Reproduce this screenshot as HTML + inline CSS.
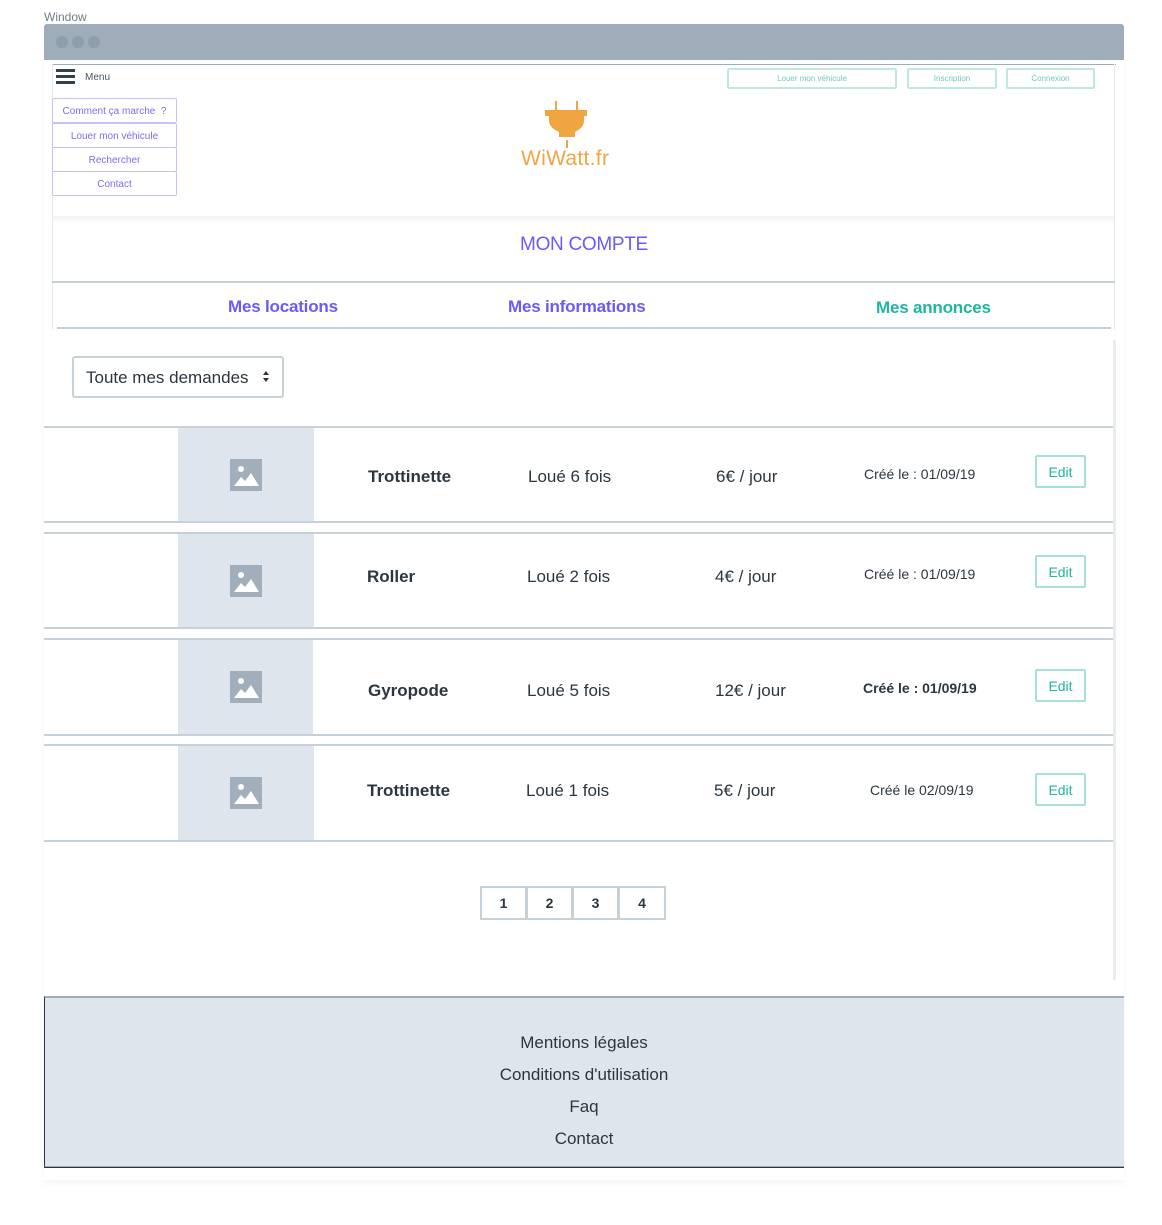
<!DOCTYPE html>
<html><head><meta charset="utf-8"><style>
*{margin:0;padding:0;box-sizing:border-box}
body{width:1162px;height:1225px;background:#fff;position:relative;font-family:"Liberation Sans",sans-serif;color:#2b3640;overflow:hidden}
.a{position:absolute}
.t{position:absolute;white-space:nowrap}
.hl{position:absolute;height:2px;background:#c5d0d9}
.menu{position:absolute;left:52px;width:125px;height:25px;border:1px solid #c9c0fb;border-radius:2px;color:#7b6cf5;font-size:10px;text-align:center;line-height:25px}
.tb{position:absolute;top:68px;height:21px;border:2px solid #bfe8e2;border-radius:2px;color:#6fc8bb;font-size:8px;text-align:center;line-height:18px}
.img{position:absolute;left:178px;width:136px;height:95px;background:#dfe5ec}
.img svg{position:absolute;left:52px;top:31px}
.nm{font-weight:bold;font-size:17px}
.c{font-size:17px}
.d{font-size:14px}
.ed{position:absolute;left:1035px;width:51px;height:33px;border:2px solid #a6e0d8;border-radius:2px;color:#1fb5a0;font-size:14px;text-align:center;line-height:30px}
.pg{position:absolute;top:886px;width:47px;height:34px;border:2px solid #c5d0d9;font-weight:bold;font-size:14px;text-align:center;line-height:30px}
.f{position:absolute;left:44px;width:1080px;text-align:center;font-size:17px;color:#2b3640}
</style></head><body>
<div class="t" style="left:44px;top:10px;font-size:12px;color:#6f7d88">Window</div>
<div class="a" style="left:44px;top:24px;width:1080px;height:36px;background:#9eadb9;border-radius:3px 3px 0 0"></div>
<div class="a" style="left:56px;top:36px;width:12px;height:12px;border-radius:6px;background:#8f9eab"></div>
<div class="a" style="left:72px;top:36px;width:12px;height:12px;border-radius:6px;background:#8f9eab"></div>
<div class="a" style="left:88px;top:36px;width:12px;height:12px;border-radius:6px;background:#8f9eab"></div>
<div class="a" style="left:44px;top:60px;width:1080px;height:1120px;box-shadow:0 4px 6px rgba(0,0,0,0.04)"></div>
<div class="a" style="left:52px;top:64px;width:1064px;height:1px;background:#9eadb9"></div>
<div class="a" style="left:52px;top:64px;width:1px;height:266px;background:#e6eaee"></div>
<div class="a" style="left:1114px;top:64px;width:1px;height:266px;background:#e6eaee"></div>
<div class="a" style="left:53px;top:216px;width:1061px;height:8px;background:linear-gradient(#f1f2f3,#fff)"></div>
<div class="a" style="left:56px;top:69px;width:19px;height:3px;background:#34404a"></div>
<div class="a" style="left:56px;top:75px;width:19px;height:3px;background:#34404a"></div>
<div class="a" style="left:56px;top:81px;width:19px;height:3px;background:#34404a"></div>
<div class="t" style="left:85px;top:72px;font-size:10px;color:#4a5560">Menu</div>
<div class="menu" style="top:98px">Comment ça marche &nbsp;?</div>
<div class="menu" style="top:123px">Louer mon véhicule</div>
<div class="menu" style="top:147px">Rechercher</div>
<div class="menu" style="top:171px">Contact</div>
<div class="tb" style="left:727px;width:170px">Louer mon véhicule</div>
<div class="tb" style="left:907px;width:90px">Inscription</div>
<div class="tb" style="left:1006px;width:89px">Connexion</div>
<svg class="a" style="left:540px;top:98px" width="54" height="52" viewBox="0 0 54 52">
<rect x="15" y="3" width="2" height="10" fill="#f0a540"/><rect x="36" y="3" width="2" height="10" fill="#f0a540"/>
<rect x="5" y="12" width="42" height="6" fill="#f0a540"/>
<path d="M9 18 H44 V22 C44 30 38 32 35 34 V39 H19 V34 C16 32 9 30 9 22 Z" fill="#f0a540"/>
<rect x="26" y="42" width="2" height="8" fill="#f0a540"/>
</svg>
<div class="t" style="left:521px;top:147px;font-size:21px;color:#f0a540;letter-spacing:0.3px">WiWatt.fr</div>
<div class="t" style="left:0;width:1168px;text-align:center;top:234px;font-size:19px;color:#6a5af9;letter-spacing:-0.3px">MON COMPTE</div>
<div class="hl" style="left:52px;top:281px;width:1063px"></div>
<div class="t" style="left:228px;top:297px;font-size:17px;font-weight:bold;color:#6a5af9;letter-spacing:-0.2px">Mes locations</div>
<div class="t" style="left:508px;top:297px;font-size:17px;font-weight:bold;color:#6a5af9;letter-spacing:-0.2px">Mes informations</div>
<div class="t" style="left:876px;top:298px;font-size:17px;font-weight:bold;color:#1fb5a0;letter-spacing:-0.2px">Mes annonces</div>
<div class="hl" style="left:57px;top:327px;width:1054px"></div>
<div class="a" style="left:1113px;top:340px;width:3px;height:640px;background:#e8ecef"></div>
<div class="a" style="left:72px;top:356px;width:212px;height:42px;border:2px solid #c5d0d9;border-radius:3px"></div>
<div class="t" style="left:86px;top:368px;font-size:17px">Toute mes demandes</div>
<svg class="a" style="left:262px;top:370px" width="8" height="13"><path d="M1 5 L4 1 L7 5Z M1 8 L4 12 L7 8Z" fill="#2b3640"/></svg>

<div class="hl" style="left:44px;top:426px;width:1069px"></div>
<div class="img" style="top:428px"><svg width="32" height="32"><rect width="32" height="32" fill="#a0afbb"/><circle cx="11" cy="10" r="3" fill="#fff"/><path d="M4 27 L11 18 L15 22 L21 14 L29 27Z" fill="#fff"/></svg></div>
<div class="t nm" style="left:368px;top:467px">Trottinette</div>
<div class="t c" style="left:528px;top:467px">Loué 6 fois</div>
<div class="t c" style="left:716px;top:467px">6€ / jour</div>
<div class="t d" style="left:864px;top:466px">Créé le : 01/09/19</div>
<div class="ed" style="top:455px">Edit</div>
<div class="hl" style="left:44px;top:521px;width:1069px"></div>

<div class="hl" style="left:44px;top:532px;width:1069px"></div>
<div class="img" style="top:534px"><svg width="32" height="32"><rect width="32" height="32" fill="#a0afbb"/><circle cx="11" cy="10" r="3" fill="#fff"/><path d="M4 27 L11 18 L15 22 L21 14 L29 27Z" fill="#fff"/></svg></div>
<div class="t nm" style="left:367px;top:567px">Roller</div>
<div class="t c" style="left:527px;top:567px">Loué 2 fois</div>
<div class="t c" style="left:715px;top:567px">4€ / jour</div>
<div class="t d" style="left:864px;top:566px">Créé le : 01/09/19</div>
<div class="ed" style="top:555px">Edit</div>
<div class="hl" style="left:44px;top:627px;width:1069px"></div>

<div class="hl" style="left:44px;top:638px;width:1069px"></div>
<div class="img" style="top:640px;width:135px"><svg width="32" height="32"><rect width="32" height="32" fill="#a0afbb"/><circle cx="11" cy="10" r="3" fill="#fff"/><path d="M4 27 L11 18 L15 22 L21 14 L29 27Z" fill="#fff"/></svg></div>
<div class="t nm" style="left:368px;top:681px">Gyropode</div>
<div class="t c" style="left:527px;top:681px">Loué 5 fois</div>
<div class="t c" style="left:715px;top:681px">12€ / jour</div>
<div class="t d" style="left:863px;top:680px;font-weight:bold;color:#2b3640">Créé le : 01/09/19</div>
<div class="ed" style="top:669px">Edit</div>
<div class="hl" style="left:44px;top:734px;width:1069px"></div>

<div class="hl" style="left:44px;top:744px;width:1069px"></div>
<div class="img" style="top:746px"><svg width="32" height="32"><rect width="32" height="32" fill="#a0afbb"/><circle cx="11" cy="10" r="3" fill="#fff"/><path d="M4 27 L11 18 L15 22 L21 14 L29 27Z" fill="#fff"/></svg></div>
<div class="t nm" style="left:367px;top:781px">Trottinette</div>
<div class="t c" style="left:526px;top:781px">Loué 1 fois</div>
<div class="t c" style="left:714px;top:781px">5€ / jour</div>
<div class="t d" style="left:870px;top:782px">Créé le 02/09/19</div>
<div class="ed" style="top:773px">Edit</div>
<div class="hl" style="left:44px;top:840px;width:1069px"></div>

<div class="pg" style="left:480px">1</div>
<div class="pg" style="left:526px">2</div>
<div class="pg" style="left:572px">3</div>
<div class="pg" style="left:618px;width:48px">4</div>

<div class="a" style="left:44px;top:996px;width:1080px;height:172px;background:#dfe5ec;border-top:2px solid #9eadb9;border-left:1px solid #333;border-bottom:2px solid #9eadb9"></div>
<div class="a" style="left:44px;top:1167px;width:1080px;height:1px;background:#333"></div>
<div class="f" style="top:1033px">Mentions légales</div>
<div class="f" style="top:1065px">Conditions d'utilisation</div>
<div class="f" style="top:1097px">Faq</div>
<div class="f" style="top:1129px">Contact</div>
</body></html>
